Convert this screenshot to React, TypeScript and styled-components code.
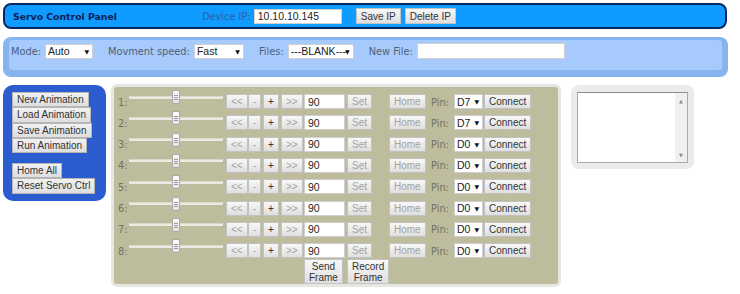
import React from "react";
import styled, { createGlobalStyle } from "styled-components";

const GlobalStyle = createGlobalStyle`
  html, body { margin: 0; padding: 0; background: #ffffff; }
  body { font-family: "DejaVu Sans", Verdana, sans-serif; }
  * { box-sizing: border-box; }
`;

const Page = styled.div`
  display: flex;
  flex-direction: column;
  align-items: flex-start;
  padding: 3px 0 0 3px;
`;

const Header = styled.header`
  width: 724px;
  height: 26px;
  border: 2px solid #0b2763;
  border-radius: 8px;
  background: #0f9bff;
  display: flex;
  align-items: center;
  padding: 0 0 0 8px;
`;

const Title = styled.h1`
  margin: 0;
  width: 189px;
  font: bold 9.3px "DejaVu Sans", Verdana, sans-serif;
  color: #0c1f55;
`;

const Label = styled.label<{ $tone: "header" | "bar" | "panel" }>`
  font-family: "DejaVu Sans", Verdana, sans-serif;
  font-size: 9.8px;
  white-space: nowrap;
  color: ${(p) =>
    p.$tone === "header" ? "#2a62ab" : p.$tone === "bar" ? "#4f5f78" : "#72725f"};
`;

const TextInput = styled.input<{ $w: number; $h?: number }>`
  width: ${(p) => p.$w}px;
  height: ${(p) => p.$h ?? 15}px;
  border: 1px solid #d0d0d0;
  background: #ffffff;
  font: 10.5px "Liberation Sans", Arial, sans-serif;
  color: #222;
  padding: 0 0 0 3px;
  margin: 0;
  outline: none;
`;

const Button = styled.button<{ $muted?: boolean; $h?: number }>`
  font: 10px "Liberation Sans", Arial, sans-serif;
  height: ${(p) => p.$h ?? 15}px;
  padding: 0 4px;
  margin: 0;
  border: 1px solid #c2c2c2;
  border-radius: 0;
  background: linear-gradient(#f8f8f8, #dfdfdf);
  color: ${(p) => (p.$muted ? "#a3a3a3" : "#333333")};
  line-height: 11px;
  white-space: nowrap;
  cursor: pointer;
`;

const HeaderButton = styled(Button)`
  height: 16px;
  margin-left: ${(p) => (p.$muted ? 14 : 4)}px;
  color: #333;
`;

const SelectWrap = styled.span<{ $w: number }>`
  position: relative;
  display: inline-flex;
  width: ${(p) => p.$w}px;
  height: 15px;
  &::after {
    content: "▼";
    position: absolute;
    right: 4px;
    top: 4px;
    font-size: 6px;
    line-height: 7px;
    color: #111;
    pointer-events: none;
  }
`;

const Select = styled.select`
  appearance: none;
  width: 100%;
  height: 100%;
  border: 1px solid #cfcfcf;
  border-radius: 0;
  background: #ffffff;
  font: 10.5px "Liberation Sans", Arial, sans-serif;
  color: #222;
  padding: 0 0 0 2px;
  margin: 0;
  outline: none;
`;

const Toolbar = styled.div`
  width: 725px;
  height: 40px;
  margin-top: 8px;
  background: #86b4ee;
  border-radius: 8px;
  padding: 3px 6px 7px 6px;
`;

const ToolbarInner = styled.div`
  height: 30px;
  background: #a6cafc;
  border-radius: 3px;
  display: flex;
  align-items: flex-start;
  padding: 3px 2px;
`;

const ToolField = styled.div<{ $first?: boolean }>`
  display: flex;
  align-items: center;
  gap: 4px;
  height: 16px;
  margin-left: ${(p) => (p.$first ? 0 : 15)}px;
`;

const Content = styled.div`
  display: flex;
  align-items: flex-start;
  margin-top: 8px;
`;

const SidePanel = styled.aside`
  width: 103px;
  background: #2b5dd1;
  border-radius: 10px;
  padding: 7px 0 7px 9px;
  display: flex;
  flex-direction: column;
  align-items: flex-start;
`;

const SideButton = styled(Button)<{ $gapAbove?: boolean }>`
  height: 15.33px;
  background: linear-gradient(#f2f2f2, #dedede);
  border-color: #b5b5b5;
  margin-top: ${(p) => (p.$gapAbove ? 9.7 : 0)}px;
`;

const ServoPanel = styled.section`
  width: 450px;
  margin-left: 5px;
  margin-top: -1px;
  border: 3px solid #e6e6e2;
  border-radius: 6px;
  background: #bdbc9d;
  padding: 7px 0 0 4px;
`;

const ServoGrid = styled.div`
  display: grid;
  grid-template-columns: 11px 97px 22px 15px 18px 23px 43px 42px 42px 23px 30px 47px;
  grid-template-rows: repeat(8, 15px) 19.67px;
  row-gap: 6.33px;
  align-items: center;
  justify-items: start;
`;

const RowLabel = styled(Label)`
  line-height: 15px;
  padding-top: 1px;
`;

const SliderBox = styled.div`
  position: relative;
  width: 94px;
  height: 14px;
  align-self: start;
  margin-top: -4px;
  display: flex;
  align-items: center;
`;

const Track = styled.div`
  width: 100%;
  height: 3px;
  background: #ebebe3;
  border-radius: 1px;
  box-shadow: inset 0 1px 0 #d8d8cc;
`;

const Thumb = styled.div`
  position: absolute;
  top: 0;
  width: 8px;
  height: 14px;
  border: 1px solid #a9a9a9;
  border-radius: 2px;
  background: linear-gradient(#fcfcfc, #e3e3e3);
  &::before {
    content: "";
    position: absolute;
    left: 1px;
    right: 1px;
    top: 4px;
    height: 5px;
    background: repeating-linear-gradient(to bottom, #9c9c9c 0 1px, transparent 1px 2px);
  }
`;

const FrameButton = styled(Button)<{ $col: number }>`
  grid-column: ${(p) => p.$col};
  grid-row: 9;
  align-self: start;
  height: 25px;
  margin-top: -5.33px;
  white-space: normal;
  text-align: center;
`;

const NotePanel = styled.aside`
  width: 123px;
  height: 84px;
  margin-left: 10px;
  background: #ebebeb;
  border-radius: 8px;
  padding: 7px 6px 6px 6px;
`;

const NoteBox = styled.div`
  width: 100%;
  height: 100%;
  display: flex;
  border: 1px solid #a9a9a9;
  border-top-color: #8d8d8d;
  background: #ffffff;
`;

const NoteArea = styled.textarea`
  flex: 1;
  border: none;
  resize: none;
  outline: none;
  overflow: hidden;
  padding: 2px;
  font: 10px "Liberation Sans", Arial, sans-serif;
`;

const ScrollColumn = styled.div`
  width: 12px;
  background: #f0f0f0;
  display: flex;
  flex-direction: column;
  justify-content: space-between;
  align-items: center;
  padding: 5px 0 4px;
  font-size: 5px;
  line-height: 6px;
  color: #8a8a8a;
`;

const pins = ["D7", "D7", "D0", "D0", "D0", "D0", "D0", "D0"];
const thumbLeft = (v: number) => (v / 180) * 94 - 4;

export default function App() {
  return (
    <>
      <GlobalStyle />
      <Page>
        <Header>
          <Title>Servo Control Panel</Title>
          <Label $tone="header">Device IP:</Label>
          <TextInput $w={88} style={{ marginLeft: 3 }} defaultValue="10.10.10.145" />
          <HeaderButton $muted>Save IP</HeaderButton>
          <HeaderButton>Delete IP</HeaderButton>
        </Header>

        <Toolbar>
          <ToolbarInner>
            <ToolField $first>
              <Label $tone="bar">Mode:</Label>
              <SelectWrap $w={48}>
                <Select defaultValue="Auto">
                  <option>Auto</option>
                  <option>Manual</option>
                </Select>
              </SelectWrap>
            </ToolField>
            <ToolField>
              <Label $tone="bar">Movment speed:</Label>
              <SelectWrap $w={50}>
                <Select defaultValue="Fast">
                  <option>Fast</option>
                  <option>Slow</option>
                </Select>
              </SelectWrap>
            </ToolField>
            <ToolField>
              <Label $tone="bar">Files:</Label>
              <SelectWrap $w={66}>
                <Select defaultValue="---BLANK---">
                  <option>---BLANK---</option>
                </Select>
              </SelectWrap>
            </ToolField>
            <ToolField>
              <Label $tone="bar">New File:</Label>
              <TextInput $w={148} $h={16} />
            </ToolField>
          </ToolbarInner>
        </Toolbar>

        <Content>
          <SidePanel>
            <SideButton>New Animation</SideButton>
            <SideButton>Load Animation</SideButton>
            <SideButton>Save Animation</SideButton>
            <SideButton>Run Animation</SideButton>
            <SideButton $gapAbove>Home All</SideButton>
            <SideButton>Reset Servo Ctrl</SideButton>
          </SidePanel>

          <ServoPanel>
            <ServoGrid>
              {pins.map((pin, i) => (
                <React.Fragment key={i}>
                  <RowLabel $tone="panel">{i + 1}:</RowLabel>
                  <SliderBox>
                    <Track />
                    <Thumb style={{ left: thumbLeft(90) }} />
                  </SliderBox>
                  <Button $muted>&lt;&lt;</Button>
                  <Button $muted>-</Button>
                  <Button>+</Button>
                  <Button $muted>&gt;&gt;</Button>
                  <TextInput $w={41} defaultValue="90" />
                  <Button $muted>Set</Button>
                  <Button $muted>Home</Button>
                  <RowLabel $tone="panel">Pin:</RowLabel>
                  <SelectWrap $w={29}>
                    <Select defaultValue={pin}>
                      <option>D0</option>
                      <option>D7</option>
                    </Select>
                  </SelectWrap>
                  <Button>Connect</Button>
                </React.Fragment>
              ))}
              <FrameButton $col={7}>
                Send
                <br />
                Frame
              </FrameButton>
              <FrameButton $col={8}>
                Record
                <br />
                Frame
              </FrameButton>
            </ServoGrid>
          </ServoPanel>

          <NotePanel>
            <NoteBox>
              <NoteArea />
              <ScrollColumn>
                <span>▲</span>
                <span>▼</span>
              </ScrollColumn>
            </NoteBox>
          </NotePanel>
        </Content>
      </Page>
    </>
  );
}
